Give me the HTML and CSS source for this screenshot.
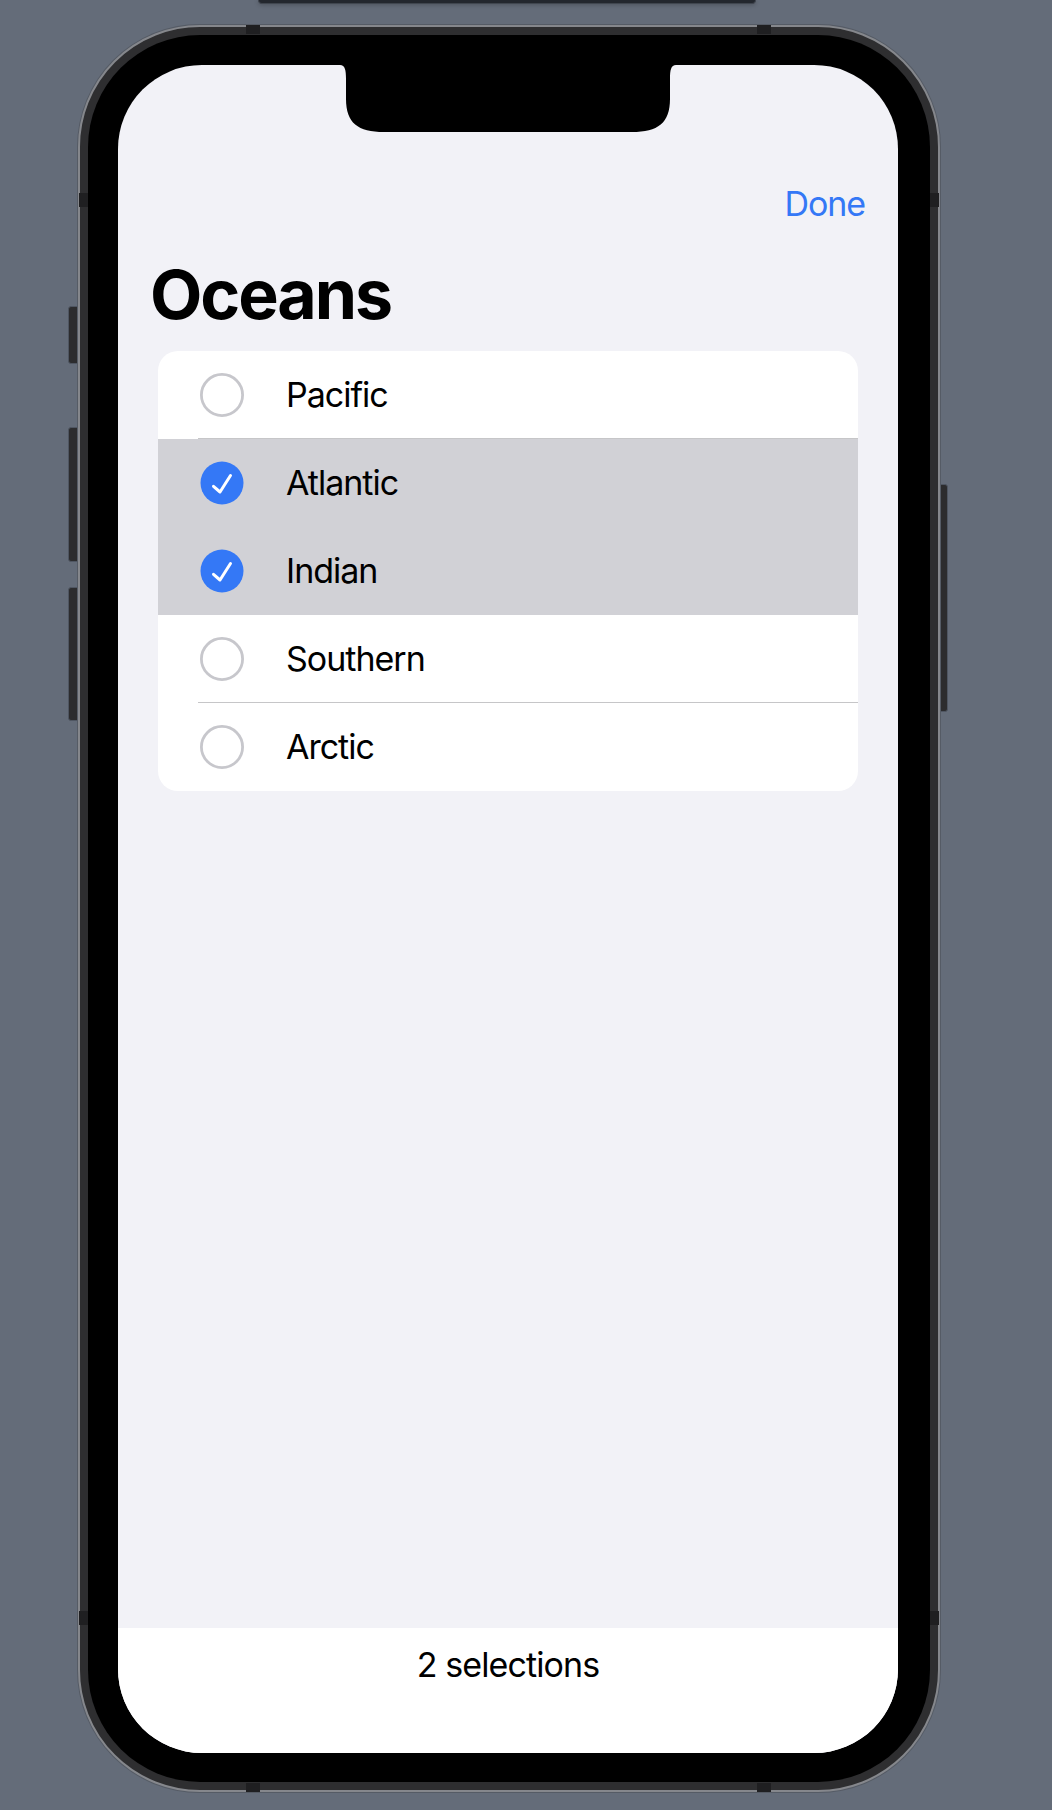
FILE: index.html
```html
<!DOCTYPE html>
<html lang="en">
<head>
<meta charset="utf-8">
<title>Oceans</title>
<link rel="stylesheet" href="styles.css">
</head>
<body>
<div class="top-bar"></div>
<div class="phone">
  <div class="side-btn btn-silent"></div>
  <div class="side-btn btn-vol-up"></div>
  <div class="side-btn btn-vol-down"></div>
  <div class="side-btn btn-power"></div>
  <div class="antenna ant-top-l"></div>
  <div class="antenna ant-top-r"></div>
  <div class="antenna ant-bot-l"></div>
  <div class="antenna ant-bot-r"></div>
  <div class="antenna ant-left-t"></div>
  <div class="antenna ant-left-b"></div>
  <div class="antenna ant-right-t"></div>
  <div class="antenna ant-right-b"></div>
  <div class="bezel">
    <div class="screen">
      <svg class="notch" width="336" height="67" viewBox="0 0 336 67"><path d="M0 0 H336 C331 0 330 5 330 14 V34 C330 58 318 67 292 67 H44 C18 67 6 58 6 34 V14 C6 5 5 0 0 0 Z" fill="#000"/></svg>
      <div class="nav"><span class="done">Done</span></div>
      <h1 class="title">Oceans</h1>
      <ul class="list">
        <li class="row sep">
          <svg class="mark" viewBox="0 0 44 44"><circle cx="22" cy="22" r="20.6" fill="none" stroke="#c7c7cc" stroke-width="2.8"/></svg>
          <span class="label">Pacific</span>
        </li>
        <li class="row selected">
          <svg class="mark" viewBox="0 0 44 44"><circle cx="22" cy="22" r="21.5" fill="#3478f6"/><path d="M13.5 25.3 L20 31 L30.5 14.5" fill="none" stroke="#fff" stroke-width="3" stroke-linecap="round" stroke-linejoin="round"/></svg>
          <span class="label">Atlantic</span>
        </li>
        <li class="row selected">
          <svg class="mark" viewBox="0 0 44 44"><circle cx="22" cy="22" r="21.5" fill="#3478f6"/><path d="M13.5 25.3 L20 31 L30.5 14.5" fill="none" stroke="#fff" stroke-width="3" stroke-linecap="round" stroke-linejoin="round"/></svg>
          <span class="label">Indian</span>
        </li>
        <li class="row sep">
          <svg class="mark" viewBox="0 0 44 44"><circle cx="22" cy="22" r="20.6" fill="none" stroke="#c7c7cc" stroke-width="2.8"/></svg>
          <span class="label">Southern</span>
        </li>
        <li class="row">
          <svg class="mark" viewBox="0 0 44 44"><circle cx="22" cy="22" r="20.6" fill="none" stroke="#c7c7cc" stroke-width="2.8"/></svg>
          <span class="label">Arctic</span>
        </li>
      </ul>
      <div class="spacer"></div>
      <div class="toolbar">2 selections</div>
    </div>
  </div>
</div>
</body>
</html>
```

FILE: styles.css
```css
html, body {
  margin: 0;
  padding: 0;
}

body {
  background: #646c79;
  height: 1810px;
  overflow: hidden;
  font-family: Inter, "Noto Sans", "Liberation Sans", sans-serif;
  color: #000;
}

.top-bar {
  margin-left: 258px;
  width: 498px;
  height: 4px;
  background: #23272e;
  border: 1px solid #40464f;
  border-top: none;
  border-radius: 0 0 4px 4px;
  box-sizing: border-box;
  box-shadow: 0 1px 4px rgba(0, 0, 0, 0.25);
}

.phone {
  position: relative;
  margin-top: 21px;
  margin-left: 78px;
  width: 862px;
  height: 1767px;
  box-sizing: border-box;
  border: 2px solid #85878c;
  border-radius: 122px;
  background: #2e2e30;
  padding: 8px;
  box-shadow: 0 0 0 1px #555b65;
}

.side-btn {
  position: absolute;
  z-index: -1;
  background: #2c2c2e;
  border: 1px solid #4f5662;
  border-radius: 3px;
  box-sizing: border-box;
}

.btn-silent { left: -12px; top: 279px; width: 16px; height: 58px; }
.btn-vol-up { left: -12px; top: 400px; width: 16px; height: 135px; }
.btn-vol-down { left: -12px; top: 560px; width: 16px; height: 134px; }
.btn-power { right: -10px; top: 457px; width: 14px; height: 228px; }

.antenna {
  position: absolute;
  background: #1f1f21;
}

.ant-top-l { top: -2px; left: 166px; width: 14px; height: 9px; }
.ant-top-r { top: -2px; left: 677px; width: 14px; height: 9px; }
.ant-bot-l { bottom: -2px; left: 166px; width: 14px; height: 9px; }
.ant-bot-r { bottom: -2px; left: 677px; width: 14px; height: 9px; }
.ant-left-t { left: -1px; top: 166px; width: 9px; height: 14px; }
.ant-left-b { left: -1px; top: 1584px; width: 9px; height: 14px; }
.ant-right-t { right: -1px; top: 166px; width: 9px; height: 14px; }
.ant-right-b { right: -1px; top: 1584px; width: 9px; height: 14px; }

.bezel {
  position: relative;
  height: 100%;
  box-sizing: border-box;
  background: #000;
  border-radius: 112px;
  padding: 30px 32px 29px 30px;
}

.screen {
  position: relative;
  width: 780px;
  height: 1688px;
  background: #f2f2f7;
  border-radius: 84px;
  overflow: hidden;
  display: flex;
  flex-direction: column;
}

.notch {
  position: absolute;
  top: 0;
  left: 222px;
  display: block;
}

.nav {
  padding: 119px 33px 0 0;
  height: 40px;
  line-height: 40px;
  text-align: right;
  font-size: 34px;
}

.done {
  color: #3478f6;
  letter-spacing: -1.1px;
}

.title {
  margin: 30px 0 0 32px;
  font-size: 68px;
  font-weight: 700;
  line-height: 80px;
  height: 80px;
  letter-spacing: -2.1px;
}

.list {
  list-style: none;
  margin: 17px 40px 0 40px;
  padding: 0;
  background: #fff;
  border-radius: 20px;
  overflow: hidden;
}

.row {
  position: relative;
  height: 88px;
  display: flex;
  align-items: center;
  padding-left: 42px;
  gap: 42px;
}

.row.selected {
  background: #d1d1d6;
}

.row.sep::after {
  content: "";
  position: absolute;
  left: 40px;
  right: 0;
  bottom: 0;
  height: 1px;
  background: #c6c6c8;
}

.mark {
  width: 44px;
  height: 44px;
  flex: none;
  display: block;
}

.label {
  font-size: 34px;
  line-height: 90px;
  letter-spacing: -1px;
}

.spacer {
  flex: 1;
}

.toolbar {
  height: 125px;
  box-sizing: border-box;
  padding-top: 17px;
  background: #fff;
  text-align: center;
  font-size: 34px;
  line-height: 40px;
  letter-spacing: -0.9px;
}
```
